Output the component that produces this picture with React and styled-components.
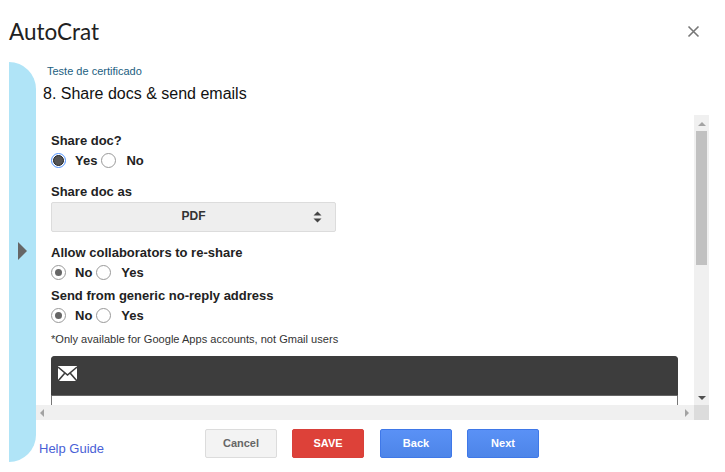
import React from "react";
import styled, { createGlobalStyle } from "styled-components";

const Global = createGlobalStyle`
  html, body { margin: 0; padding: 0; background: #fff; }
  body { font-family: "Liberation Sans", Arial, sans-serif; color: #222; }
`;

const Page = styled.div`
  width: 725px;
  height: 472px;
  overflow: hidden;
`;
const TitleBar = styled.div`
  height: 62px;
  display: flex;
  align-items: center;
  justify-content: space-between;
  padding: 0 25px 0 9px;
  box-sizing: border-box;
`;
const AppTitle = styled.div`
  font-family: Lato, sans-serif;
  font-size: 22.5px;
  color: #212121;
`;
const Close = styled.button`
  border: 0;
  background: none;
  padding: 0;
  width: 13px;
  height: 13px;
  display: flex;
`;
const Body = styled.div`
  display: flex;
  height: 400px;
  padding-left: 9px;
`;
const Side = styled.div`
  width: 27px;
  background: #b0e4f7;
  border-radius: 0 27px 27px 0;
  display: flex;
  align-items: center;
  padding-left: 9px;
  box-sizing: border-box;
`;
const SideArrow = styled.div`
  width: 0;
  height: 0;
  border-left: 9px solid #666;
  border-top: 9px solid transparent;
  border-bottom: 9px solid transparent;
  margin-top: -22px;
`;
const Main = styled.div`
  width: 673px;
  display: flex;
  flex-direction: column;
`;
const Sub = styled.div`
  font-size: 11px;
  line-height: 13px;
  height: 13px;
  color: #22607f;
  padding: 3px 0 0 11px;
`;
const Heading = styled.div`
  font-size: 16px;
  line-height: 20px;
  color: #111;
  padding: 6px 0 0 7px;
  height: 31px;
`;
const Frame = styled.div`
  display: grid;
  grid-template-columns: 658px 15px;
  grid-template-rows: 290px 15px;
  flex: none;
`;
const Viewport = styled.div`
  overflow: hidden;
  padding: 18px 16px 0 15px;
`;
const Label = styled.div`
  font-size: 13px;
  font-weight: bold;
  line-height: 15px;
  color: #222;
  margin-top: ${p => p.$top || 0}px;
`;
const RadioRow = styled.div`
  display: flex;
  align-items: center;
  height: 15px;
  margin-top: ${p => p.$top || 5}px;
`;
const Radio = styled.span`
  width: 15px;
  height: 15px;
  box-sizing: border-box;
  border-radius: 50%;
  border: 1px solid ${p => (p.$focus ? "#4d90fe" : "#999")};
  background: #fff;
  display: flex;
  align-items: center;
  justify-content: center;
  flex: none;
  &::after {
    content: "";
    display: ${p => (p.$on ? "block" : "none")};
    width: ${p => (p.$focus ? 11 : 7)}px;
    height: ${p => (p.$focus ? 11 : 7)}px;
    border-radius: 50%;
    background: ${p => (p.$focus ? "#555" : "#666")};
    ${p => p.$focus && "border: 1px solid #222; box-sizing: border-box;"}
  }
`;
const RadioText = styled.span`
  font-size: 13px;
  font-weight: bold;
  color: #222;
  margin: 0 ${p => p.$after}px 0 ${p => p.$before}px;
`;
const Select = styled.div`
  width: 285px;
  height: 30px;
  margin-top: 3px;
  padding-bottom: 2px;
  box-sizing: border-box;
  background: #eee;
  border: 1px solid #dcdcdc;
  border-radius: 2px;
  display: flex;
  align-items: center;
  justify-content: center;
  position: relative;
  font-size: 12px;
  font-weight: bold;
  color: #333;
`;
const Updown = styled.svg`
  position: absolute;
  right: 13px;
  top: 8px;
`;
const Note = styled.div`
  font-size: 11.07px;
  line-height: 13px;
  color: #333;
  margin-top: 10px;
`;
const Panel = styled.div`
  margin-top: 10px;
  border: 1px solid #777;
  border-bottom: 0;
  border-radius: 4px 4px 0 0;
  height: 60px;
`;
const PanelHead = styled.div`
  height: 40px;
  margin: -1px -1px 0;
  background: #3d3d3d;
  border-bottom: 1px solid #666;
  border-radius: 4px 4px 0 0;
  padding: 10px 0 0 7px;
  box-sizing: border-box;
`;
const VBar = styled.div`
  background: #f0f0f0;
  display: flex;
  flex-direction: column;
  align-items: center;
  justify-content: space-between;
  padding: 7px 0 5px;
  box-sizing: border-box;
  position: relative;
`;
const Thumb = styled.div`
  position: absolute;
  top: 16px;
  left: 2px;
  width: 11px;
  height: 134px;
  background: #c1c1c1;
`;
const HBar = styled.div`
  background: #f0f0f0;
  display: flex;
  align-items: center;
  justify-content: space-between;
  padding: 0 5px 0 4px;
`;
const Corner = styled.div`
  background: #dcdcdc;
`;
const Tri = styled.div`
  width: 0;
  height: 0;
  ${p =>
    p.$dir === "up" && `border: 4px solid transparent; border-top: 0; border-bottom: 4px solid ${p.$c};`}
  ${p =>
    p.$dir === "down" && `border: 4px solid transparent; border-bottom: 0; border-top: 4px solid ${p.$c};`}
  ${p =>
    p.$dir === "left" && `border: 4px solid transparent; border-left: 0; border-right: 4px solid ${p.$c};`}
  ${p =>
    p.$dir === "right" && `border: 4px solid transparent; border-right: 0; border-left: 4px solid ${p.$c};`}
`;
const Footer = styled.div`
  display: flex;
  align-items: flex-start;
  padding: 9px 0 0 3px;
`;
const Help = styled.a`
  width: 166px;
  font-size: 13px;
  line-height: 15px;
  margin-top: 12px;
  color: #4a5fd6;
`;
const Buttons = styled.div`
  display: flex;
  gap: 15px;
`;
const Btn = styled.button`
  width: 72px;
  height: 29px;
  box-sizing: border-box;
  border-radius: 2px;
  padding: 0 0 2px;
  margin-left: ${p => p.$shift || 0}px;
  font-family: inherit;
  font-size: 11px;
  font-weight: bold;
  color: ${p => p.$color};
  background: ${p => p.$bg};
  border: 1px solid ${p => p.$line};
`;

const blue = "linear-gradient(#5a91f6, #4d85e8)";

const Options = ({ items }) => (
  <>
    {items.map(o => (
      <React.Fragment key={o.text}>
        <Radio $on={o.on} $focus={o.focus} />
        <RadioText $before={o.before} $after={o.after}>{o.text}</RadioText>
      </React.Fragment>
    ))}
  </>
);

export default function App() {
  return (
    <Page>
      <Global />
      <TitleBar>
        <AppTitle>AutoCrat</AppTitle>
        <Close aria-label="Close">
          <svg width="13" height="13" viewBox="0 0 13 13">
            <path d="M1.5 1.5l10 10M11.5 1.5l-10 10" stroke="#777" strokeWidth="1.6" fill="none" />
          </svg>
        </Close>
      </TitleBar>
      <Body>
        <Side>
          <SideArrow />
        </Side>
        <Main>
          <Sub>Teste de certificado</Sub>
          <Heading>8. Share docs &amp; send emails</Heading>
          <Frame>
            <Viewport>
              <Label>Share doc?</Label>
              <RadioRow>
                <Options
                  items={[
                    { text: "Yes", on: true, focus: true, before: 9, after: 4 },
                    { text: "No", before: 10, after: 0 }
                  ]}
                />
              </RadioRow>
              <Label $top={16}>Share doc as</Label>
              <Select>
                PDF
                <Updown width="9" height="12" viewBox="0 0 9 12">
                  <path d="M4.5 0.5L8.5 4.5H0.5zM4.5 11.5L0.5 7.5H8.5z" fill="#444" />
                </Updown>
              </Select>
              <Label $top={13}>Allow collaborators to re-share</Label>
              <RadioRow>
                <Options
                  items={[
                    { text: "No", on: true, before: 9, after: 4 },
                    { text: "Yes", before: 10, after: 0 }
                  ]}
                />
              </RadioRow>
              <Label $top={8}>Send from generic no-reply address</Label>
              <RadioRow>
                <Options
                  items={[
                    { text: "No", on: true, before: 9, after: 4 },
                    { text: "Yes", before: 10, after: 0 }
                  ]}
                />
              </RadioRow>
              <Note>*Only available for Google Apps accounts, not Gmail users</Note>
              <Panel>
                <PanelHead>
                  <svg width="19" height="15" viewBox="0 0 19 15">
                    <path d="M0 0h19v15H0z" fill="#fff" />
                    <path d="M0 1l9.5 8L19 1M0 15l6.5-7.5M19 15L12.5 7.5" stroke="#3d3d3d" strokeWidth="1.6" fill="none" />
                  </svg>
                </PanelHead>
              </Panel>
            </Viewport>
            <VBar>
              <Tri $dir="up" $c="#a3a3a3" />
              <Thumb />
              <Tri $dir="down" $c="#505050" />
            </VBar>
            <HBar>
              <Tri $dir="left" $c="#a3a3a3" />
              <Tri $dir="right" $c="#a3a3a3" />
            </HBar>
            <Corner />
          </Frame>
          <Footer>
            <Help>Help Guide</Help>
            <Buttons>
              <Btn $bg="#f3f3f3" $line="#dcdcdc" $color="#666">Cancel</Btn>
              <Btn $bg="#dd4139" $line="#d8403a" $color="#fff">SAVE</Btn>
              <Btn $shift={1} $bg={blue} $line="#3f78e8" $color="#fff">Back</Btn>
              <Btn $bg={blue} $line="#3f78e8" $color="#fff">Next</Btn>
            </Buttons>
          </Footer>
        </Main>
      </Body>
    </Page>
  );
}
